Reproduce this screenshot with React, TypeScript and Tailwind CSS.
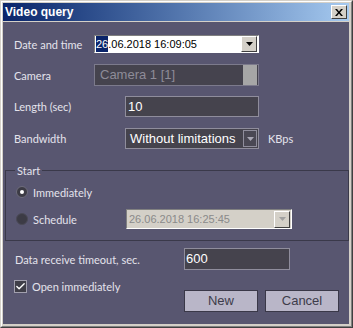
import { Check } from 'lucide-react';

const label = "text-[11px] text-[#e4e3ec] leading-none whitespace-nowrap";
const field = "whitespace-nowrap text-[13px] [font-family:'Liberation_Sans',Arial,sans-serif]";

function ClassicArrow({ disabled }: { disabled?: boolean }) {
  return (
    <div className="flex h-full w-[16px] items-center justify-center border-t border-l border-t-white border-l-white border-r border-b border-r-[#404040] border-b-[#404040] bg-[#d4d0c8]">
      <svg width="7" height="4" viewBox="0 0 7 4">
        <path d="M0 0h7L3.5 4z" fill={disabled ? '#a0a0a0' : '#000'} />
      </svg>
    </div>
  );
}

export default function App() {
  return (
    <div className="h-[328px] w-[353px] overflow-hidden bg-[#d4d0c8] [font-family:'Liberation_Sans',Arial,sans-serif]">
      <div className="flex h-full w-full flex-col border-t border-l border-t-[#d4d0c8] border-l-[#d4d0c8] border-r border-b border-r-[#404040] border-b-[#404040]">
        <div className="flex h-full w-full flex-col border-t border-l border-t-white border-l-white border-r border-b border-r-[#808080] border-b-[#808080] p-px pb-[2px] pr-[2px]">
          {/* title bar */}
          <div className="flex h-[18px] shrink-0 items-center justify-between bg-gradient-to-r from-[#0a246a] to-[#a6caf0] pl-[2px] pr-[2px]">
            <span className="text-[12px] font-bold text-white">Video query</span>
            <button className="flex h-[14px] w-[16px] items-center justify-center border-t border-l border-t-white border-l-white border-r border-b border-r-[#404040] border-b-[#404040] bg-[#d4d0c8]">
              <svg width="8" height="7" viewBox="0 0 8 7">
                <path d="M0 0h2l2 2.5L6 0h2L5 3.5 8 7H6L4 4.5 2 7H0l3-3.5z" fill="#000" />
              </svg>
            </button>
          </div>
          {/* body */}
          <div className="mt-px flex flex-1 flex-col bg-[#585670] [font-family:Lato,'Liberation_Sans',sans-serif]">
            <div className="mt-[13px] flex h-[18px] items-center">
              <span className={`${label} w-[80px] pl-[11px]`}>Date and time</span>
              <div className="ml-[11px] flex h-[18px] w-[165px] items-center border-t border-l border-t-[#808080] border-l-[#808080] border-b border-r border-b-white border-r-white bg-white">
                <div className="flex h-full flex-1 items-center pl-px text-[11px] text-black [font-family:'Liberation_Sans',Arial,sans-serif]">
                  <span className="bg-[#0a246a] text-white">26</span>
                  <span>.06.2018 16:09:05</span>
                </div>
                <div className="h-[16px] py-0 pr-px">
                  <ClassicArrow />
                </div>
              </div>
            </div>

            <div className="mt-[11px] flex h-[22px] items-center">
              <span className={`${label} w-[91px] pl-[11px]`}>Camera</span>
              <div className="flex h-[22px] w-[165px] items-center border border-[#7c7a8c] bg-[#45434e] pl-[5px] pr-px">
                <span className={`${field} flex-1 text-[#8e8c98]`}>Camera 1 [1]</span>
                <div className="h-[20px] w-[14px] bg-[#a6a6a6]" />
              </div>
            </div>

            <div className="mt-[10px] flex h-[21px] items-center">
              <span className={`${label} w-[122px] pl-[11px]`}>Length (sec)</span>
              <div className={`${field} flex h-[21px] w-[134px] items-center border border-[#8f8d9c] bg-[#45434d] pl-[2px] text-white`}>
                10
              </div>
            </div>

            <div className="mt-[11px] flex h-[21px] items-center">
              <span className={`${label} w-[122px] pl-[11px]`}>Bandwidth</span>
              <div className="flex h-[21px] w-[134px] items-center border border-[#8f8d9c] bg-[#45434d] pl-[4px] pr-px">
                <span className={`${field} flex-1 text-white`}>Without limitations</span>
                <div className="flex h-[17px] w-[14px] items-center justify-center border border-[#8f8d9c] bg-[#4a4854]">
                  <svg width="7" height="4" viewBox="0 0 7 4">
                    <path d="M0 0h7L3.5 4z" fill="#a8a6b4" />
                  </svg>
                </div>
              </div>
              <span className={`${label} ml-[9px]`}>KBps</span>
            </div>

            <fieldset className="ml-[2px] mt-[16px] h-[76px] w-[344px] border border-[#3a394a]">
              <legend className={`${label} ml-[9px] px-[2px] leading-[14px]`}>Start</legend>
              <div className="mt-[10px] flex h-[12px] items-center pl-[10px]">
                <span className="flex h-[12px] w-[12px] items-center justify-center rounded-full border border-[#6e6c7c] bg-[#3c3b45]">
                  <span className="h-[4px] w-[4px] rounded-full bg-white" />
                </span>
                <span className={`${label} ml-[5px]`}>Immediately</span>
              </div>
              <div className="mt-[11px] flex h-[20px] items-center pl-[10px]">
                <span className="h-[12px] w-[12px] rounded-full border border-[#4a4956] bg-[#3c3b45]" />
                <span className={`${label} ml-[5px] w-[93px]`}>Schedule</span>
                <div className="flex h-[20px] w-[166px] items-center border-t border-l border-t-[#808080] border-l-[#808080] border-b border-r border-b-white border-r-white bg-[#d4d0c8]">
                  <span className="flex-1 pl-[2px] text-[11px] text-[#8a8a8a] [font-family:'Liberation_Sans',Arial,sans-serif]">26.06.2018 16:25:45</span>
                  <div className="h-[17px] pr-px">
                    <ClassicArrow disabled />
                  </div>
                </div>
              </div>
            </fieldset>

            <div className="mt-[7px] flex h-[22px] items-center">
              <span className={`${label} w-[181px] pl-[12px]`}>Data receive timeout, sec.</span>
              <div className={`${field} flex h-[22px] w-[106px] items-center border border-[#8f8d9c] bg-[#45434d] pl-px text-white`}>
                600
              </div>
            </div>

            <div className="flex h-[44px]">
              <div className="mt-[10px] flex h-[14px] items-start pl-[11px]">
                <span className="flex h-[13px] w-[13px] items-center justify-center border border-[#a2a0ae] bg-[#3f3e48]">
                  <Check className="h-[11px] w-[11px] text-white" strokeWidth={3} />
                </span>
                <span className={`${label} ml-[5px] mt-px`}>Open immediately</span>
              </div>
              <div className="ml-auto mr-[10px] mt-[20px] flex h-[22px] gap-[7px]">
                <button className={`${field} h-[22px] w-[74px] border border-[#3a3848] bg-[#b9b6c8] text-[#3d3c4a]`}>New</button>
                <button className={`${field} h-[22px] w-[74px] border border-[#3a3848] bg-[#b9b6c8] text-[#3d3c4a]`}>Cancel</button>
              </div>
            </div>
          </div>
        </div>
      </div>
    </div>
  );
}
